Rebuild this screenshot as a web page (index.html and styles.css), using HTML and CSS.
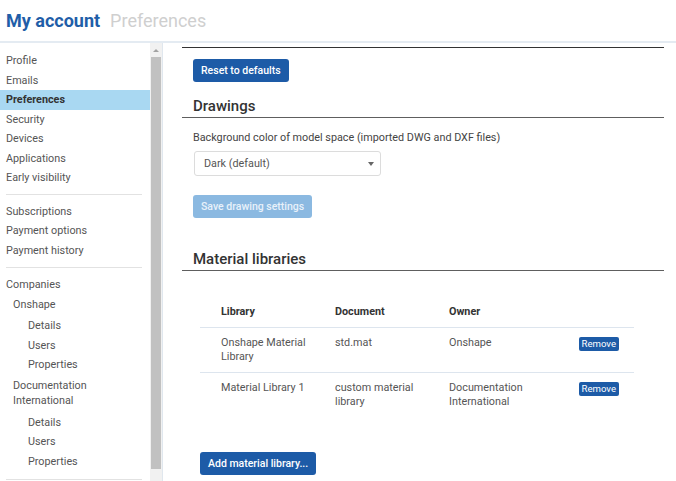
FILE: index.html
```html
<!DOCTYPE html>
<html lang="en">
<head>
<meta charset="utf-8">
<title>My account - Preferences</title>
<link rel="stylesheet" href="styles.css">
</head>
<body>
<header class="topbar">
  <h1 class="title">My account</h1>
  <span class="subtitle">Preferences</span>
</header>
<div class="layout">
  <nav class="sidebar">
    <ul class="nav-group first">
      <li class="nav-item">Profile</li>
      <li class="nav-item">Emails</li>
      <li class="nav-item active">Preferences</li>
      <li class="nav-item">Security</li>
      <li class="nav-item">Devices</li>
      <li class="nav-item">Applications</li>
      <li class="nav-item">Early visibility</li>
    </ul>
    <ul class="nav-group">
      <li class="nav-item">Subscriptions</li>
      <li class="nav-item">Payment options</li>
      <li class="nav-item">Payment history</li>
    </ul>
    <ul class="nav-group">
      <li class="nav-item">Companies</li>
      <li class="nav-item level1">Onshape</li>
      <li>
        <ul class="sub">
          <li class="nav-item level2">Details</li>
          <li class="nav-item level2">Users</li>
          <li class="nav-item level2">Properties</li>
        </ul>
      </li>
      <li class="nav-item level1 wrap">Documentation International</li>
      <li>
        <ul class="sub">
          <li class="nav-item level2">Details</li>
          <li class="nav-item level2">Users</li>
          <li class="nav-item level2">Properties</li>
        </ul>
      </li>
    </ul>
  </nav>
  <div class="scrollbar">
    <div class="scroll-arrow"></div>
    <div class="scroll-thumb"></div>
  </div>
  <main class="content">
    <div class="rule-top"></div>
    <button class="btn btn-primary reset">Reset to defaults</button>

    <h2 class="section-title">Drawings</h2>
    <p class="field-label">Background color of model space (imported DWG and DXF files)</p>
    <div class="select">
      <span>Dark (default)</span>
      <span class="caret"></span>
    </div>
    <button class="btn btn-disabled save">Save drawing settings</button>

    <h2 class="section-title materials">Material libraries</h2>
    <table class="lib-table">
      <thead>
        <tr><th>Library</th><th>Document</th><th>Owner</th><th></th></tr>
      </thead>
      <tbody>
        <tr>
          <td>Onshape Material<br>Library</td>
          <td>std.mat</td>
          <td>Onshape</td>
          <td class="action"><button class="btn-small">Remove</button></td>
        </tr>
        <tr>
          <td>Material Library 1</td>
          <td>custom material<br>library</td>
          <td>Documentation<br>International</td>
          <td class="action"><button class="btn-small">Remove</button></td>
        </tr>
      </tbody>
    </table>
    <button class="btn btn-primary add">Add material library...</button>
  </main>
</div>
</body>
</html>
```
FILE: styles.css
```css
* { box-sizing: border-box; }
html, body { margin: 0; padding: 0; }
body {
  font-family: Roboto, "Liberation Sans", sans-serif;
  font-size: 10.8px;
  color: #444;
  background: #fff;
  width: 676px;
  height: 481px;
  overflow: hidden;
}
.topbar {
  height: 43px;
  display: flex;
  align-items: baseline;
  padding: 10px 6px 0;
  border-bottom: 2px solid #e4ebf2;
}
.title {
  margin: 0;
  font-size: 18px;
  font-weight: 700;
  color: #1f5ea8;
}
.subtitle {
  margin-left: 10px;
  font-size: 18px;
  color: #cfcfcf;
}
.layout {
  display: flex;
  height: 438px;
}
.sidebar {
  width: 150px;
  flex: none;
  padding-top: 8px;
  overflow: hidden;
}
ul { list-style: none; margin: 0; padding: 0; }
.nav-group {
  margin: 0 8px 7px 6px;
  padding-bottom: 7px;
  border-bottom: 1px solid #e2e2e2;
}
.nav-group.first { padding-bottom: 6px; }
.nav-item {
  padding: 2px 0;
  line-height: 15.5px;
  color: #555;
}
.nav-item.active {
  background: #a9d8f2;
  margin-left: -6px;
  margin-right: -8px;
  padding-left: 6px;
  font-weight: 700;
  color: #333;
}
.level1 { padding-left: 7px; }
.level2 { padding-left: 22px; }
.wrap { max-width: 110px; }
.sub { margin: 2px 0 1px; }
.scrollbar {
  width: 13px;
  flex: none;
  background: #f1f1f1;
  border-right: 1px solid #e0e7ee;
  display: flex;
  flex-direction: column;
  align-items: center;
  padding: 0 1px 12px;
}
.scroll-arrow {
  margin: 6px 0 5px;
  width: 0;
  height: 0;
  border-left: 3px solid transparent;
  border-right: 3px solid transparent;
  border-bottom: 3px solid #a3a3a3;
}
.scroll-thumb {
  width: 10px;
  flex: 1;
  background: #c1c1c1;
}
.content {
  flex: 1;
  padding: 4px 12px 0 19px;
  overflow: hidden;
}
.rule-top {
  border-top: 1px solid #333;
}
.btn {
  display: block;
  border: none;
  border-radius: 3px;
  font-family: inherit;
  font-size: 10.5px;
  font-weight: 500;
  height: 23px;
  padding: 0 8px;
  color: #fff;
}
.btn-primary { background: #1d5ba7; }
.btn-disabled { background: #8bb9e1; color: #e8f1fa; }
.reset { margin: 11px 0 0 11px; }
.section-title {
  margin: 0;
  font-size: 15px;
  font-weight: 500;
  color: #333;
  padding: 0 0 1px 11px;
  border-bottom: 1px solid #5e5e5e;
  line-height: 20px;
}
.section-title:first-of-type { margin-top: 14px; }
.field-label {
  margin: 12px 0 0 11px;
  line-height: 15px;
  color: #444;
}
.select {
  margin: 6px 0 0 12px;
  width: 187px;
  height: 25px;
  border: 1px solid #dcdcdc;
  border-radius: 3px;
  display: flex;
  align-items: center;
  justify-content: space-between;
  padding: 0 6px 0 9px;
  color: #555;
}
.caret {
  width: 0;
  height: 0;
  border-left: 3px solid transparent;
  border-right: 3px solid transparent;
  border-top: 4px solid #666;
}
.save { margin: 19px 0 0 11px; }
.section-title.materials { margin-top: 31px; }
.lib-table {
  margin: 26px 0 0 18px;
  width: 434px;
  border-collapse: collapse;
}
.lib-table th, .lib-table td {
  text-align: left;
  vertical-align: top;
  padding: 8px 0 8px 21px;
  line-height: 14px;
  width: 114px;
}
.lib-table th {
  font-weight: 700;
  color: #333;
  border-bottom: 1px solid #dde5ee;
}
.lib-table td { color: #555; }
.lib-table tbody tr:first-child td { border-bottom: 1px solid #dde5ee; }
.lib-table th:last-child, .lib-table td.action { width: auto; padding-left: 0; }
.lib-table td.action { padding-top: 9px; }
.btn-small {
  display: block;
  margin-left: auto;
  margin-right: 15px;
  border: none;
  border-radius: 2px;
  background: #1d5ba7;
  color: #fff;
  font-family: inherit;
  font-size: 9.6px;
  height: 14px;
  padding: 0 3px;
  line-height: 14px;
}
.add { margin: 35px 0 0 18px; }
```
